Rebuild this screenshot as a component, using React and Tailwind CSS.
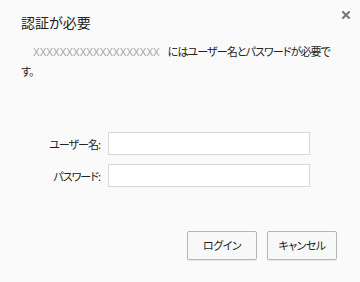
const JP = "[font-family:'Noto_Sans_CJK_JP','Noto_Sans',sans-serif] [font-feature-settings:'palt']"

function Field({ label, type }) {
  return (
    <div className="flex items-center">
      <label className="w-[100px] text-right text-[11px] leading-[16px] tracking-[-1px] text-[#222]">{label}</label>
      <input
        type={type}
        className="ml-[8px] h-[23px] w-[202px] border border-[#d9d9d9] bg-white px-1 text-[12px] outline-none"
      />
    </div>
  )
}

function Button({ children }) {
  return (
    <button className="h-[29px] w-[70px] rounded-[2px] border border-[#b5b5b5] bg-[#f8f8f8] text-[11px] tracking-[-0.5px] text-[#222] shadow-[0_1px_1px_rgba(0,0,0,0.08)]">
      {children}
    </button>
  )
}

export default function App() {
  return (
    <div className={`h-[282px] w-[360px] overflow-hidden bg-[#fafafa] ${JP}`}>
      <div className="flex items-start justify-between pl-[21px] pr-[10px] pt-[12px]">
        <h1 className="text-[14px] leading-[20px] font-normal text-[#222]">認証が必要</h1>
        <button className="mt-[-1px] flex h-[8px] w-[8px] items-center justify-center" aria-label="close">
          <svg width="8" height="8" viewBox="0 0 8 8">
            <path d="M1 1L7 7M7 1L1 7" stroke="#777" strokeWidth="2" strokeLinecap="square" />
          </svg>
        </button>
      </div>
      <p className="mt-[10px] pl-[21px] text-[11px] leading-[19px] tracking-[-0.9px] text-[#222]">
        <span className="whitespace-nowrap">
          <span className="pl-[12px] pr-[8px] font-['Liberation_Sans',sans-serif] text-[10px] tracking-normal text-[#a3a3a3]">
            XXXXXXXXXXXXXXXXXXX
          </span>
          にはユーザー名とパスワードが必要で
        </span>
        <br />
        す。
      </p>
      <div className="mt-[51px] flex flex-col gap-[9px]">
        <Field label="ユーザー名:" type="text" />
        <Field label="パスワード:" type="password" />
      </div>
      <div className="mt-[44px] flex justify-end gap-[10px] pr-[23px]">
        <Button>ログイン</Button>
        <Button>キャンセル</Button>
      </div>
    </div>
  )
}
